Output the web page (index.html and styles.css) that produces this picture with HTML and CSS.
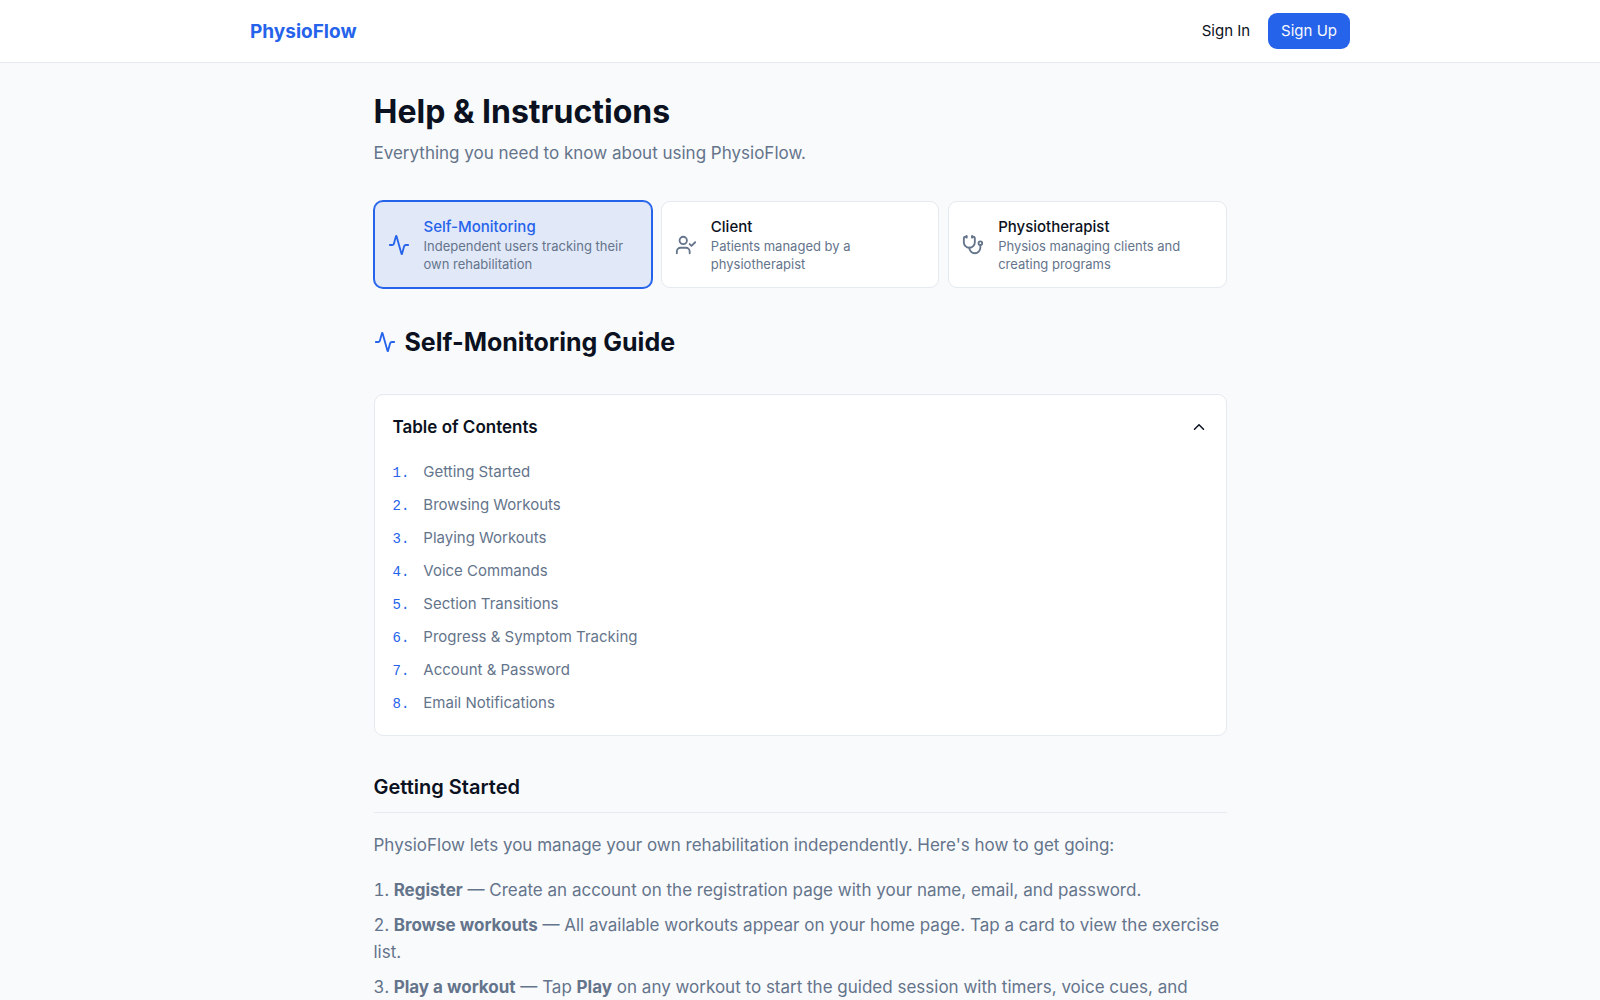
FILE: index.html
```html
<!DOCTYPE html>
<html lang="en">
<head>
<meta charset="utf-8">
<meta name="viewport" content="width=device-width, initial-scale=1">
<title>Help &amp; Instructions - PhysioFlow</title>
<link rel="stylesheet" href="styles.css">
</head>
<body>
<header class="site-header">
  <div class="site-header-inner">
    <a class="brand" href="#">PhysioFlow</a>
    <nav class="site-nav">
      <a class="nav-link" href="#">Sign In</a>
      <a class="nav-button" href="#">Sign Up</a>
    </nav>
  </div>
</header>
<main class="page">
  <h1 class="page-title">Help &amp; Instructions</h1>
  <p class="page-lead">Everything you need to know about using PhysioFlow.</p>

  <div class="roles">
    <button class="role role-active" type="button">
      <svg class="icon" viewBox="0 0 24 24" aria-hidden="true"><path d="M22 12h-2.48a2 2 0 0 0-1.93 1.46l-2.35 8.36a.25.25 0 0 1-.48 0L9.24 2.18a.25.25 0 0 0-.48 0l-2.35 8.36A2 2 0 0 1 4.49 12H2"/></svg>
      <span class="role-text">
        <span class="role-name">Self-Monitoring</span>
        <span class="role-desc">Independent users tracking their own rehabilitation</span>
      </span>
    </button>
    <button class="role" type="button">
      <svg class="icon" viewBox="0 0 24 24" aria-hidden="true"><path d="m16 11 2 2 4-4"/><path d="M16 21v-2a4 4 0 0 0-4-4H6a4 4 0 0 0-4 4v2"/><circle cx="9" cy="7" r="4"/></svg>
      <span class="role-text">
        <span class="role-name">Client</span>
        <span class="role-desc">Patients managed by a physiotherapist</span>
      </span>
    </button>
    <button class="role" type="button">
      <svg class="icon" viewBox="0 0 24 24" aria-hidden="true"><path d="M11 2v2"/><path d="M5 2v2"/><path d="M5 3H4a2 2 0 0 0-2 2v4a6 6 0 0 0 12 0V5a2 2 0 0 0-2-2h-1"/><path d="M8 15a6 6 0 0 0 12 0v-3"/><circle cx="20" cy="10" r="2"/></svg>
      <span class="role-text">
        <span class="role-name">Physiotherapist</span>
        <span class="role-desc">Physios managing clients and creating programs</span>
      </span>
    </button>
  </div>

  <h2 class="guide-title">
    <svg class="icon icon-primary" viewBox="0 0 24 24" aria-hidden="true"><path d="M22 12h-2.48a2 2 0 0 0-1.93 1.46l-2.35 8.36a.25.25 0 0 1-.48 0L9.24 2.18a.25.25 0 0 0-.48 0l-2.35 8.36A2 2 0 0 1 4.49 12H2"/></svg>
    Self-Monitoring Guide
  </h2>

  <nav class="toc" aria-label="Table of Contents">
    <button class="toc-toggle" type="button" aria-expanded="true">
      Table of Contents
      <svg class="icon icon-small" viewBox="0 0 24 24" aria-hidden="true"><path d="m18 15-6-6-6 6"/></svg>
    </button>
    <ol class="toc-list">
      <li><a class="toc-link" href="#getting-started"><span class="toc-number">1.</span>Getting Started</a></li>
      <li><a class="toc-link" href="#"><span class="toc-number">2.</span>Browsing Workouts</a></li>
      <li><a class="toc-link" href="#"><span class="toc-number">3.</span>Playing Workouts</a></li>
      <li><a class="toc-link" href="#"><span class="toc-number">4.</span>Voice Commands</a></li>
      <li><a class="toc-link" href="#"><span class="toc-number">5.</span>Section Transitions</a></li>
      <li><a class="toc-link" href="#"><span class="toc-number">6.</span>Progress &amp; Symptom Tracking</a></li>
      <li><a class="toc-link" href="#"><span class="toc-number">7.</span>Account &amp; Password</a></li>
      <li><a class="toc-link" href="#"><span class="toc-number">8.</span>Email Notifications</a></li>
    </ol>
  </nav>

  <section class="section" id="getting-started">
    <h3 class="section-title">Getting Started</h3>
    <p class="section-text">PhysioFlow lets you manage your own rehabilitation independently. Here's how to get going:</p>
    <ol class="steps">
      <li><strong>Register</strong> — Create an account on the registration page with your name, email, and password.</li>
      <li><strong>Browse workouts</strong> — All available workouts appear on your home page. Tap a card to view the exercise list.</li>
      <li><strong>Play a workout</strong> — Tap <strong>Play</strong> on any workout to start the guided session with timers, voice cues, and</li>
    </ol>
  </section>
</main>
</body>
</html>
```
FILE: styles.css
```css
:root {
  --primary: #2563eb;
  --foreground: #0b1120;
  --muted: #64748b;
  --border: #e5e9f0;
  --background: #f9fafc;
  --card: #ffffff;
}

*,
*::before,
*::after {
  box-sizing: border-box;
}

body {
  margin: 0;
  background: var(--background);
  color: var(--foreground);
  font-family: Inter, "Liberation Sans", sans-serif;
  font-size: 17px;
  line-height: 27px;
}

h1,
h2,
h3,
p,
ol {
  margin: 0;
  padding: 0;
}

a {
  color: inherit;
  text-decoration: none;
}

button {
  font: inherit;
  color: inherit;
  text-align: left;
  cursor: pointer;
}

.icon {
  flex: none;
  width: 22px;
  height: 22px;
  fill: none;
  stroke: currentColor;
  stroke-width: 2;
  stroke-linecap: round;
  stroke-linejoin: round;
}

.icon-primary {
  color: var(--primary);
}

.icon-small {
  width: 18px;
  height: 18px;
}

.site-header {
  background: var(--card);
  border-bottom: 1px solid var(--border);
}

.site-header-inner {
  display: flex;
  align-items: center;
  justify-content: space-between;
  max-width: 1136px;
  margin: 0 auto;
  padding: 13px 18px;
}

.brand {
  color: var(--primary);
  font-size: 19px;
  font-weight: 700;
}

.site-nav {
  display: flex;
  align-items: center;
  gap: 18px;
  font-size: 15px;
  line-height: 20px;
}

.nav-button {
  padding: 8px 13px;
  border-radius: 9px;
  background: var(--primary);
  color: #f8fafc;
}

.page {
  max-width: 889px;
  margin: 0 auto;
  padding: 29px 18px 0;
}

.page-title {
  font-size: 32px;
  line-height: 40px;
  font-weight: 700;
}

.page-lead {
  margin-top: 7px;
  color: var(--muted);
  line-height: 28px;
}

.roles {
  display: grid;
  grid-template-columns: repeat(3, 1fr);
  gap: 9px;
  margin-top: 34px;
}

.role {
  display: flex;
  align-items: center;
  gap: 14px;
  padding: 14px 13px;
  border: 1px solid var(--border);
  border-radius: 9px;
  background: var(--card);
}

.role .icon {
  color: var(--muted);
}

.role-text {
  display: flex;
  flex-direction: column;
}

.role-name {
  font-size: 15px;
  line-height: 21px;
  font-weight: 500;
}

.role-desc {
  color: var(--muted);
  font-size: 13px;
  line-height: 18px;
}

.role-active {
  border-color: var(--primary);
  background: #e1e8f8;
  box-shadow: 0 0 0 1px var(--primary);
}

.role-active .icon,
.role-active .role-name {
  color: var(--primary);
}

.guide-title {
  display: flex;
  align-items: center;
  gap: 9px;
  margin-top: 38px;
  font-size: 25px;
  line-height: 32px;
  font-weight: 700;
}

.toc {
  margin-top: 36px;
  padding-bottom: 16px;
  border: 1px solid var(--border);
  border-radius: 9px;
  background: var(--card);
}

.toc-toggle {
  display: flex;
  align-items: center;
  justify-content: space-between;
  width: 100%;
  padding: 18px 18px 14px;
  border: 0;
  background: none;
  line-height: 28px;
  font-weight: 600;
}

.toc-list {
  padding: 0 18px;
  list-style: none;
}

.toc-link {
  display: flex;
  align-items: baseline;
  gap: 14px;
  color: var(--muted);
  font-size: 15px;
  line-height: 33px;
}

.toc-number {
  color: var(--primary);
  font-family: "Liberation Mono", monospace;
  font-size: 14px;
  line-height: 20px;
}

.section {
  margin-top: 37px;
}

.section-title {
  padding-bottom: 11px;
  border-bottom: 1px solid var(--border);
  font-size: 20px;
  line-height: 28px;
  font-weight: 600;
}

.section-text {
  margin-top: 19px;
  color: var(--muted);
}

.steps {
  display: flex;
  flex-direction: column;
  gap: 8px;
  margin-top: 18px;
  color: var(--muted);
  list-style-position: inside;
}

.steps strong {
  font-weight: 700;
}
```
